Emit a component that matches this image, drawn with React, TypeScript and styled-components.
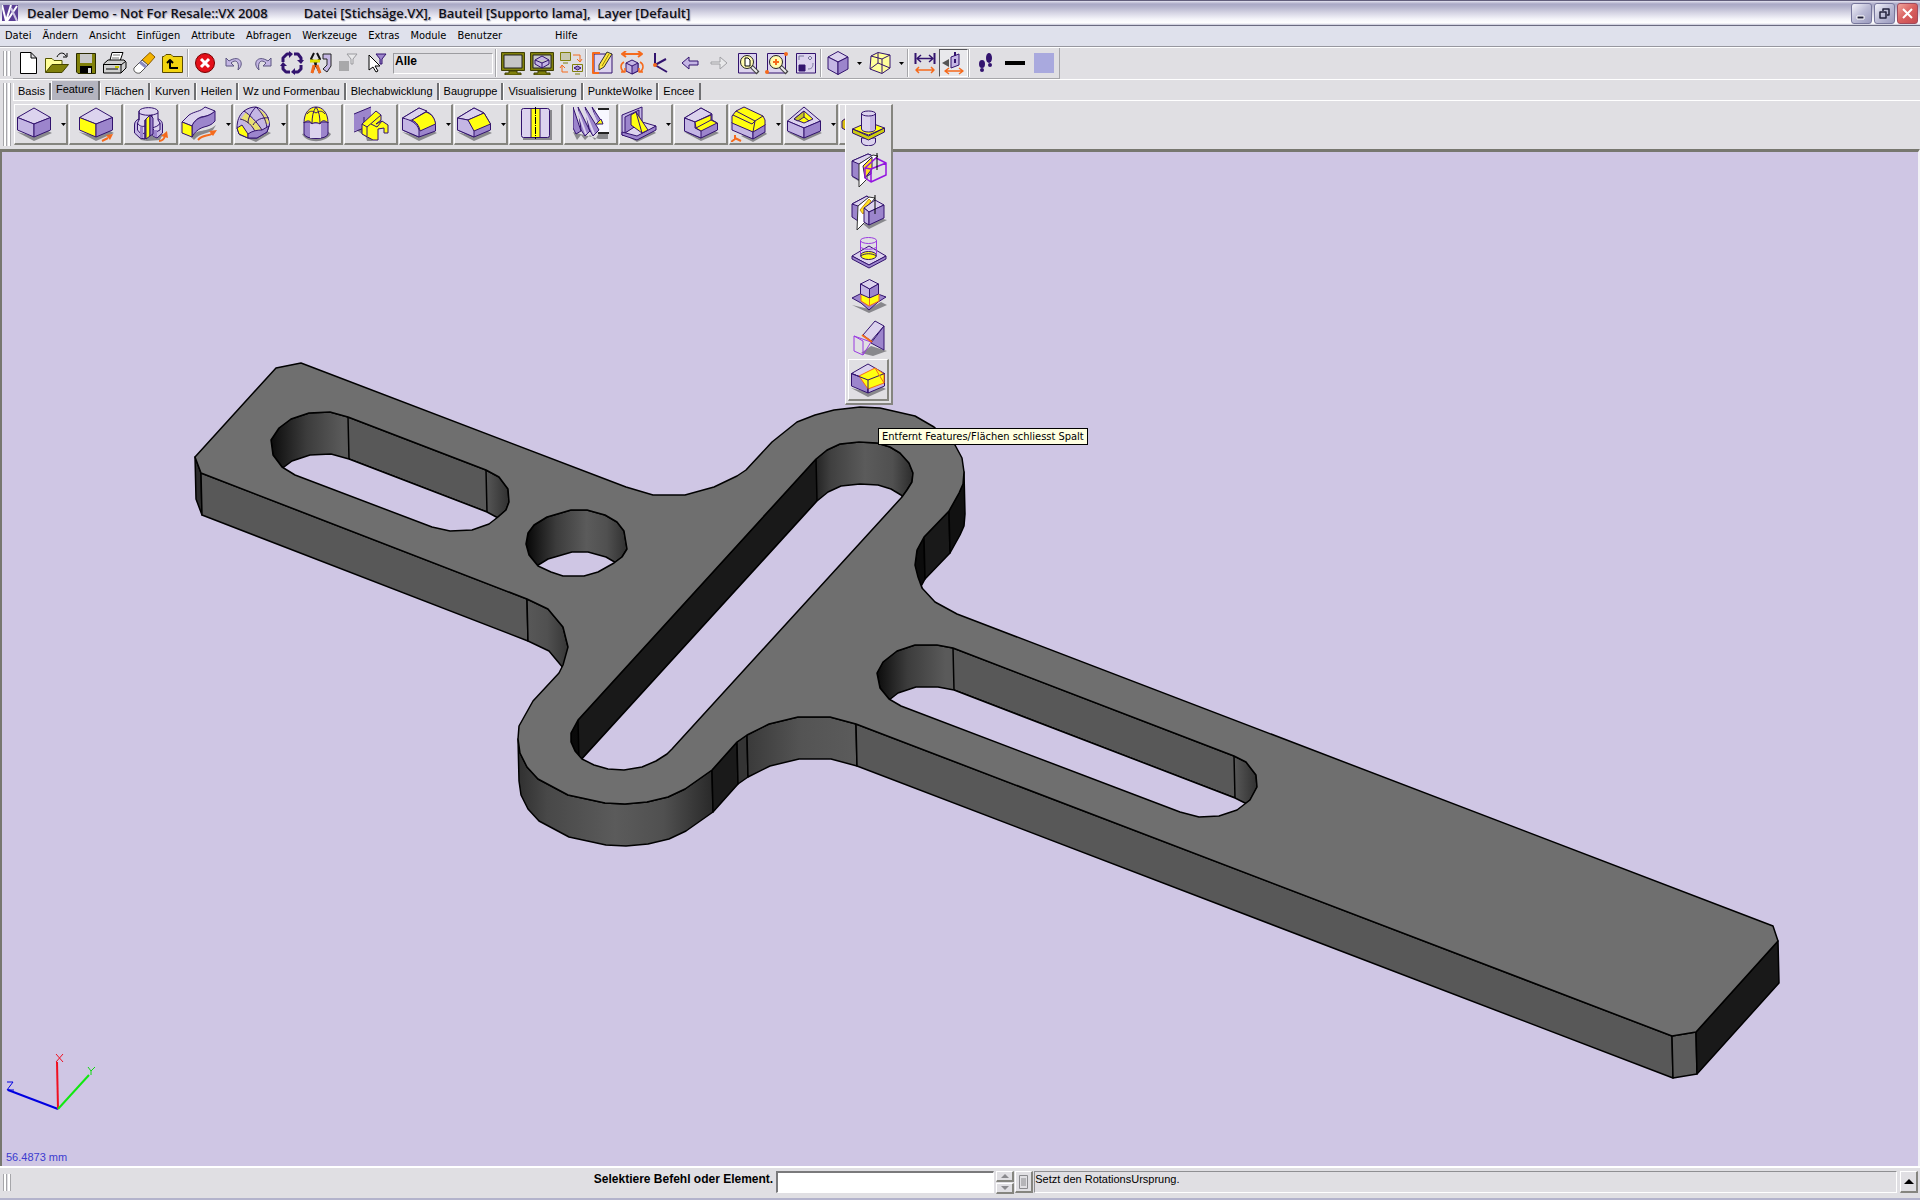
import React, { ReactNode } from "react";
import styled, { createGlobalStyle, css } from "styled-components";

const color = {
  face: "#e0dfe3",
  light: "#ffffff",
  dark: "#8a8a86",
  canvas: "#cfc6e4",
  ink: "#32136e",
  pale: "#dcd3ee",
  mid: "#c4b6e4",
  deep: "#9c85cc",
  yellow: "#ffff10",
  orange: "#f56a1c",
  olive: "#80800a",
  shade: "#88888c",
};

const uiFont = `"DejaVu Sans Condensed", "DejaVu Sans", sans-serif`;
const plainFont = `"Liberation Sans", sans-serif`;

const GlobalStyle = createGlobalStyle`
  *, *::before, *::after { box-sizing: border-box; }
  body { margin: 0; background: ${color.face}; }
  button, input { font: inherit; color: inherit; margin: 0; }
`;

/* ---------- layout ---------- */

const Shell = styled.div`
  display: flex;
  flex-direction: column;
  height: 100vh;
  overflow: hidden;
  background: ${color.face};
  color: #000;
  font: 11px/14px ${uiFont};
`;

const TitleBar = styled.header`
  display: flex;
  align-items: center;
  flex: none;
  height: 26px;
  padding: 0 2px;
  border-top: 1px solid #625e7c;
  border-bottom: 1px solid #6a6a80;
  background: linear-gradient(#e4e3f0 0, #a9a8c5 3px, #b5b4cd 6px, #d6d5e4 12px, #f4f4f9 18px, #fff 22px, #c5c5d6 24px);
`;

const Title = styled.h1`
  display: flex;
  gap: 36px;
  flex: 1;
  margin: 0 0 0 9px;
  font: 600 13px/20px "Open Sans", sans-serif;
  color: #101018;
  text-shadow: 1px 1px 1px #a5a5b8;
  white-space: pre;
`;

const WindowButtons = styled.div`
  display: flex;
  gap: 2px;
`;

const WindowButton = styled.button<{ $close?: boolean }>`
  display: grid;
  place-items: center;
  width: 21px;
  height: 21px;
  padding: 0;
  border: 1px solid ${(p) => (p.$close ? "#a04a5c" : "#77779c")};
  border-radius: 3px;
  background: ${(p) =>
    p.$close
      ? "linear-gradient(135deg, #f0a49c, #d9605f 50%, #c54a50)"
      : "linear-gradient(135deg, #f3f3fa, #bcbcd6 50%, #9a9abd)"};
`;

const MenuBar = styled.nav`
  display: flex;
  flex: none;
  gap: 11px;
  height: 21px;
  padding: 2px 5px;
  border-bottom: 1px solid #97979f;
  background: #dfe1ec;
`;

const MenuItem = styled.button<{ $apart?: boolean }>`
  padding: 0;
  border: 0;
  background: none;
  line-height: 14px;
  margin-left: ${(p) => (p.$apart ? "42px" : "0")};
`;

const Band = styled.div`
  display: flex;
  flex: none;
  border-top: 1px solid ${color.light};
`;

const Grip = styled.span`
  flex: none;
  align-self: stretch;
  width: 8px;
  margin: 3px 2px 3px 3px;
  border: solid #a6a6aa;
  border-width: 0 1px;
  background: linear-gradient(90deg, #fff 0 2px, #a6a6aa 2px 3px, ${color.face} 3px 4px, #fff 4px);
`;

const ToolRow = styled.div`
  display: flex;
  align-items: center;
  height: 31px;
  padding-right: 1px;
  border-right: 1px solid #a6a6aa;
  border-bottom: 1px solid #a6a6aa;
`;

const Tool = styled.button<{ $pressed?: boolean; $wide?: boolean }>`
  display: flex;
  align-items: center;
  justify-content: center;
  gap: 7px;
  width: ${(p) => (p.$wide ? "42px" : "29px")};
  height: 28px;
  padding: 0;
  border: 1px solid transparent;
  background: none;
  ${(p) =>
    p.$pressed &&
    css`
      border-color: #55555a #fff #fff #55555a;
      background: #e9e9ec;
    `}
`;

const Divider = styled.span`
  width: 2px;
  height: 28px;
  margin-right: 1px;
  border-left: 1px solid #a6a6aa;
  border-right: 1px solid #fff;
`;

const FilterField = styled.input`
  width: 100px;
  height: 21px;
  margin: 0 2px 0 0;
  padding: 0 1px 4px;
  border: 1px solid;
  border-color: #9c9ca0 #fff #fff #9c9ca0;
  background: ${color.face};
  font: 700 12px/14px ${plainFont};
`;

const RibbonBody = styled.div`
  display: flex;
  flex: 1;
  flex-direction: column;
  min-width: 0;
`;

const Tabs = styled.div`
  display: flex;
  align-items: flex-end;
  height: 21px;
  border-bottom: 1px solid #fff;
`;

const Tab = styled.button<{ $active?: boolean }>`
  height: ${(p) => (p.$active ? "19px" : "17px")};
  padding: ${(p) => (p.$active ? "0 4px 3px" : "0 4px")};
  border: 0;
  border-right: 2px solid #6f6f72;
  border-left: 1px solid #fff;
  background: ${(p) => (p.$active ? "#b4b4bf" : color.face)};
  font: 11px/15px ${plainFont};
  white-space: nowrap;
`;

const FeatureRow = styled.div`
  display: flex;
  gap: 1px;
  height: 48px;
  padding: 3px 0 0 1px;
`;

const raised = css`
  border: solid;
  border-width: 1px 2px 2px 1px;
  border-color: #fff #85857f #85857f #fff;
  background: ${color.face};
`;

const FeatureButton = styled.button<{ $menu?: boolean }>`
  ${raised}
  display: flex;
  align-items: center;
  justify-content: ${(p) => (p.$menu ? "flex-start" : "center")};
  gap: 9px;
  width: 54px;
  height: 41px;
  padding: 0 0 0 1px;
`;

const FlyoutHost = styled.div`
  position: relative;
`;

const Flyout = styled.div`
  ${raised}
  position: absolute;
  z-index: 2;
  top: 0;
  left: 6px;
  width: 48px;
  padding: 2px;
`;

const FlyoutItem = styled.button<{ $hot?: boolean }>`
  display: grid;
  place-items: center;
  position: relative;
  width: 41px;
  height: 42px;
  padding: 0;
  border: 1px solid transparent;
  background: none;
  ${(p) => p.$hot && raised}
`;

const Tooltip = styled.span`
  position: absolute;
  top: 68px;
  left: 29px;
  padding: 0 3px;
  border: 1px solid #000;
  background: #ffffe1;
  line-height: 15px;
  white-space: nowrap;
`;

const Canvas = styled.main`
  flex: 1;
  min-height: 0;
  border: solid;
  border-width: 3px 2px 0;
  border-color: #77776f #f2f2f6 #fff #77776f;
  background: ${color.canvas};
`;

const Scene = styled.svg`
  display: block;
  width: 100%;
  height: 100%;
`;

const StatusBar = styled.footer`
  display: flex;
  align-items: flex-start;
  flex: none;
  height: 34px;
  padding: 3px 2px 4px 0;
  border-top: 2px solid #fff;
  border-bottom: 2px solid #b3b3cc;
`;

const PromptLabel = styled.label`
  flex: 0 0 calc(40% - 4px);
  padding-right: 3px;
  text-align: right;
  font: 700 12px/17px ${plainFont};
`;

const CommandInput = styled.input`
  width: 218px;
  height: 22px;
  padding: 0 3px;
  border: solid;
  border-width: 2px 1px 1px 2px;
  border-color: #7a7a7c #fff #fff #7a7a7c;
  background: #fff;
`;

const Spinner = styled.div`
  display: grid;
  gap: 1px;
  margin: 0 1px 0 2px;
`;

const SmallButton = styled.button<{ $tall?: boolean }>`
  ${raised}
  display: grid;
  place-items: center;
  width: 18px;
  height: ${(p) => (p.$tall ? "22px" : "11px")};
  padding: 0;
`;

const Message = styled.output`
  flex: 1;
  height: 22px;
  margin: 0 3px 0 1px;
  border: 1px solid;
  border-color: #8f8f92 #fff #fff #8f8f92;
  font: 11px/15px ${plainFont};
`;

/* ---------- icons ---------- */

const Glyph = styled.svg`
  flex: none;
  fill: none;
  stroke: ${color.ink};
  stroke-linejoin: round;
`;

const Icon = ({ size = 24, children }: { size?: number; children: ReactNode }) => (
  <Glyph width={size} height={size} viewBox={`0 0 ${size} ${size}`} aria-hidden="true">
    {children}
  </Glyph>
);

const Caret = () => (
  <svg width="5" height="3" viewBox="0 0 5 3" aria-hidden="true">
    <path d="M0 0h5L2.500 3z" fill="#000" />
  </svg>
);

type ShapeProps = { d: string; f?: string; s?: string; w?: number };
const S = ({ d, f = "none", s, w }: ShapeProps) => (
  <path d={d} fill={f} style={s ? { stroke: s } : undefined} strokeWidth={w} />
);

const Cast = ({ d = "M1 26L18 35L36 27L30 24L18 30z" }: { d?: string }) => <S d={d} f={color.shade} s="none" />;
const Push = ({ d = "M24 35L30 32" }: { d?: string }) => (
  <>
    <S d={d} s={color.orange} w={2} />
    <S d="M28 29L35 28L32 34z" f={color.orange} s="none" />
  </>
);
const { pale, mid, deep, yellow, ink, orange, olive } = color;

const Box = ({ left = mid, right = deep, top = pale }) => (
  <>
    <S d="M1.500 11.500L18 2L34.500 11.500L18 18z" f={top} />
    <S d="M1.500 11.500L18 18V31L1.500 24z" f={left} />
    <S d="M34.500 11.500L18 18V31L34.500 24z" f={right} />
  </>
);

const feature: Record<string, ReactNode> = {
  box: <><Cast /><Box /></>,
  extrude: <><Cast /><Box left={yellow} /><Push /></>,
  revolve: (
    <>
      <Cast d="M2 27L8 34L14 35L27 34L30 28z" />
      <S d="M6 13C3 14 1.500 16 1.500 19V27L7 32L12 33V14z" f={mid} />
      <S d="M22 12C27 13 29.500 15 29.500 19V27L24 32L20 30V14z" f={mid} />
      <S d="M6 5C8 .5 23 .5 25 5V14L27 17V24L23 26L19 22V9L12 14V27L8 28L4.500 24V17L6 14z" f={pale} />
      <S d="M6 5V14M6 7C10 10 20 10 25 7M12 14V33M4.500 17C6 20 9 21 12 20M19 22C22 21 26 20 27 17" />
      <S d="M10 21V32L7 31V21zM20 24V30L24 31V24z" f={deep} s="none" />
      <S d="M13 13L17 9V30L13 33z" f={yellow} />
      <S d="M17 9L20 12V28L17 30z" f={deep} />
      <S d="M26 35C29 35 31 33 32 30" s={orange} w={2} />
      <S d="M28 30L34 25L35 32z" f={orange} s="none" />
    </>
  ),
  sweep: (
    <>
      <Cast d="M10 31C16 22 26 27 35 19L32 24C25 29 20 26 13 34z" />
      <S d="M1 16L8 9C14 5 19 6 24 1L34 5C30 9 26 10 20 11C15 13 13 16 11 20z" f={pale} />
      <S d="M11 20C13 15 17 12 22 11C27 10 31 8 34 5V15C31 19 27 20 23 21C17 23 14 26 11 31z" f={deep} />
      <S d="M1 16L11 20V31L1 27z" f={yellow} />
      <S d="M17 34C22 28 27 31 32 27" s={orange} w={2} />
      <S d="M28 25L36 24L32 30z" f={orange} s="none" />
    </>
  ),
  loft: (
    <>
      <Cast d="M3 29L20 36L35 27L28 24z" />
      <S d="M1 22C1 15 3 9 8 5C12 2 16 1 20 1C28 3 33 10 33.500 19L31 26L21 32L12 32L3 28z" f={mid} />
      <S d="M5 13L10 6L26 23L20 26L14 19z" f="#e8e070" s="none" />
      <S d="M22 3C28 5 32 11 33 17L30 19C28 12 26 8 22 3z" f="#e8e070" s="none" />
      <S d="M8 5C14 9 21 16 26 24M4 13C10 14 17 19 20 28M20 1C15 6 12 12 12 17M33 12C26 11 20 14 17 19M20 1C26 7 30 13 31 22" />
      <S d="M1 22L6 19L12 28V32L3 28z" f={yellow} />
      <S d="M12 28C16 25 21 24 26 24L33 20L31 26L21 32H12z" f={deep} />
    </>
  ),
  dome: (
    <>
      <Cast d="M4 28C9 38 28 37 33 28L28 24z" />
      <S d="M6 16V28C7 34 29 34 30 28V16z" f={deep} />
      <S d="M12 18V32H23V18z" f={pale} s="none" />
      <S d="M6 17C6 6 12 1 18 1C24 1 30 6 30 17C26 13 23 15 22 18C19 16 16 16 14 18C12 14 9 14 6 17z" f={yellow} />
      <S d="M14 18C14 11 15 5 18 1C21 5 22 11 22 18M9 8C12 4 15 5 18 7C21 5 24 4 27 8" />
    </>
  ),
  flange: (
    <>
      <Cast d="M2 23L13 31L14 35L20 35L10 22z" />
      <S d="M1 8L18 1V14L12 17V22L1 25z" f={deep} s="none" />
      <S d="M1 8L18 1M11 11V22L1 26" />
      <S d="M9 18L23 5L28 9V14L23 18L29 15L35 19V27H31V22L25 23V34L20 34L9 28z" f={yellow} />
      <S d="M9 18L14 21L28 9M14 21V30M18 18L24 21L29 15" />
    </>
  ),
  fillet: (
    <>
      <Cast />
      <S d="M1.500 12L18 2L26 6C32 8 34 14 34.500 20V25L18 31L1.500 24z" f={deep} />
      <S d="M1.500 12L18 2L26 5L11 14C8 15 4 14 1.500 12z" f={pale} />
      <S d="M1.500 12C10 14 16 17 18 24V31L1.500 24z" f={mid} />
      <S d="M11 14L25 6C31 8 34 13 34.500 18L19 25C18 19 15 16 11 14z" f={yellow} />
    </>
  ),
  chamfer: (
    <>
      <Cast />
      <S d="M1.500 12L18 2L28 7L34.500 18V24L18 31L1.500 24z" f={deep} />
      <S d="M1.500 12L18 2L28 7L12 14z" f={pale} />
      <S d="M1.500 12L12 14L18 24V31L1.500 24z" f={mid} />
      <S d="M12 14L28 7L34.500 18L18 25z" f={yellow} />
    </>
  ),
  partition: (
    <>
      <S d="M7 4H34V34H5V32z" f={color.shade} s="none" />
      <rect x="3.500" y="2.500" width="28" height="29" rx="2" fill={pale} />
      <S d="M13 2.500H22V31.500H13z" f={yellow} />
      <path d="M17.500 1V33" stroke="#000" strokeDasharray="7 1 1 1" />
    </>
  ),
  thread: (
    <>
      <S d="M0 26L4 34L8 29L12 34L17 29L22 34L26 27H35V33H26z" f={color.shade} s="none" />
      <S d="M23 3H36V26H23z" f="#f8f8ff" s="none" />
      <S d="M0 1L8 25L3 28L0 22zM5 1L17 25L12 30L8 24zM12 1L26 24L20 30L16 23zM19 1L29 16L25 18L22 11z" f={deep} />
      <S d="M3 1L13 28M10 1L21 28M17 1L25 19" s={pale} w={2} />
      <S d="M23 18L28 13L30 18z" f={yellow} />
      <S d="M25 3H36M25 27H36" s="#222" w={2} />
    </>
  ),
  rib: (
    <>
      <Cast d="M4 29L16 36L35 27L28 22z" />
      <S d="M1 9L21 1V18L1 29z" f={mid} />
      <S d="M4 11L18 4V20L4 27z" f={deep} />
      <S d="M1 29L21 16L35 20L16 32z" f={pale} />
      <S d="M1 26L16 30L35 20V24L16 34L1 29z" f={deep} />
      <S d="M10 9L15 6L27 24L21 27L10 19z" f={yellow} />
      <S d="M15 6L21 27" />
    </>
  ),
  step: (
    <>
      <Cast />
      <S d="M1.500 12L18 2L29 8V14L34.500 17V24L18 32L1.500 25z" f={deep} />
      <S d="M1.500 12L18 2L29 8L12 16z" f={pale} />
      <S d="M1.500 12L12 16V22L18 25V32L1.500 25z" f={mid} />
      <S d="M12 16L28 9V14L34 17L18 25L13 22z" f={yellow} />
      <S d="M13 22L28 14" />
    </>
  ),
  ribbon: (
    <>
      <Cast d="M10 30L22 36L36 28L30 22z" />
      <S d="M1 16L22 25V33L1 24z" f={mid} />
      <S d="M22 25L34 18V26L22 33z" f={deep} />
      <S d="M1 17V10L5 5L13 1L32 10L34 14V19L22 26z" f={yellow} />
      <S d="M5 5L24 15L32 10M24 15L22 26M2 9L21 18L24 15" />
      <S d="M4 29V33L0 36M4 32L10 35" s={orange} w={2} />
    </>
  ),
  pocket: (
    <>
      <Cast />
      <S d="M1.500 15L18 1L34.500 15L18 22z" f={pale} />
      <S d="M1.500 15L18 22V32L1.500 25z" f={mid} />
      <S d="M34.500 15L18 22V32L34.500 25z" f={deep} />
      <S d="M8 13L18 5L27 13L18 17z" f={yellow} />
      <S d="M8 13L18 5V11L12 15z" f="#c8c820" />
      <S d="M18 11L23 15" />
    </>
  ),
  combine: (
    <>
      <S d="M1 15L8 10V26L1 22z" f="#d8bd10" />
      <S d="M8 10H20V28H8z" f={pale} />
    </>
  ),
};

const flyoutIcons: ReactNode[] = [
  <>
    <S d="M10.500 28V32C11 37 24 37 24.500 32V28z" f={pale} />
    <S d="M1.500 19L17.500 12L33.500 18L17.500 25z" f={yellow} />
    <S d="M1.500 19L17.500 26L33.500 18V22L17.500 30L1.500 23z" f="#cccc10" />
    <S d="M10.500 3.500V19C11 23 24 23 24.500 19V3.500z" f={pale} />
    <S d="M19 4H24V20L19 21z" f={mid} s="none" />
    <ellipse cx="17.500" cy="3.500" rx="7" ry="2.500" fill={pale} />
    <S d="M10.500 3.500V19M24.500 3.500V19" />
  </>,
  <>
    <Cast d="M1 25L9 30L16 26L10 23z" />
    <S d="M1 9L17 2L20 3V22L8 28L1 24z" f={deep} />
    <S d="M1 9L17 2L22 4L8 12z" f={pale} />
    <S d="M8 12L22 3L27 4L16 14V27L8 35z" f="#fff" s="#333" />
    <S d="M12 14L21 5V17L14 26z" f="#ffe020" />
    <S d="M14 16L25 6L35 11L20 17zM14 16L20 17V30L14 26zM20 17L35 11V23L20 30z" s="#9414e0" w={1.5} />
    <S d="M26 1V18" s="#000" />
  </>,
  <>
    <Cast d="M12 30L18 35L36 26L28 24z" />
    <S d="M1 10L16 2L20 5V24L7 27L1 23z" f={deep} />
    <S d="M1 10L16 2L18 4L7 12z" f={pale} />
    <S d="M7 12L18 3L24 4L14 16V28L6 36z" f="#fff" s="#333" />
    <S d="M9 16L18 5L20 7L12 20z" f="#ffe020" s="#c89020" />
    <S d="M13 14L24 6L33 11L18 18z" f={pale} />
    <S d="M13 14L18 18V31L13 28z" f={mid} />
    <S d="M18 18L33 11V24L18 31z" f={deep} />
    <S d="M24 1V20" s="#000" />
  </>,
  <>
    <S d="M1 20L18 10L35 20L18 29z" f={pale} />
    <S d="M1 20L18 29L35 20V23L18 32L1 23z" f={deep} />
    <ellipse cx="17.500" cy="19.500" rx="8" ry="4" fill={yellow} />
    <S d="M10 20C13 17 22 17 25 20" />
    <S d="M9.500 4.500V18M25.500 4.500V18M9.500 11C12 14 23 14 25.500 11" s="#9a3be0" />
    <ellipse cx="17.500" cy="4.500" rx="8" ry="3" style={{ stroke: "#9a3be0" }} />
  </>,
  <>
    <Cast d="M1 27L18 35L36 27L30 24L18 31z" />
    <S d="M1 20L9 16L18 14L27 16L35 19L27 24L18 32L10 25z" f={deep} />
    <S d="M10 16L18 13L28 16V23L18 28L10 23z" f={yellow} s={orange} />
    <S d="M9.500 6L18.500 1.500L27.500 6L18.500 11z" f={pale} />
    <S d="M9.500 6L18.500 11V20L9.500 16z" f={mid} />
    <S d="M27.500 6L18.500 11V20L27.500 16z" f={deep} />
    <S d="M18.500 20V27" s={orange} />
  </>,
  <>
    <Cast d="M10 33L20 26L36 31L22 36z" />
    <S d="M12 15L24 1L33 6L20 21z" f={pale} />
    <S d="M33 6V30L20 23z" f={deep} />
    <S d="M3 16V31L12 35L20 22L3 16L12 21V35" s="#9a3be0" />
    <S d="M11 15L21 22" s={orange} w={2} />
  </>,
  <>
    <Cast />
    <Box left={deep} right={mid} />
    <S d="M9 14L25 6L34 12V21L18 27z" f={yellow} s={orange} />
    <S d="M1.500 11.500L18 18L34.500 11.500M18 18V31" />
    <S d="M25 6L34 21" s={orange} />
  </>,
];

const monitor = (
  <>
    <S d="M.5 1.500H23.500V19.500H.5z" f={olive} s="#3f3f05" />
    <S d="M3 4H21V17H3z" f="#c6c6c6" s="#222" />
    <S d="M8 20H16V22H20V24H4V22H8z" f={olive} s="#3f3f05" />
  </>
);

const Hex = ({ top = pale, left = mid, right = deep }) => (
  <>
    <S d="M2 6L12 .5L22 6L12 11z" f={top} />
    <S d="M2 6L12 11V23.500L2 18z" f={left} />
    <S d="M22 6L12 11V23.500L22 18z" f={right} />
  </>
);

const lens = (
  <>
    <S d="M15 15L22 22" s="#444" w={4} />
    <S d="M16 16L21 21" s="#eee" w={2} />
    <circle cx="11" cy="11" r="6.500" fill="#fffbb0" stroke="#222" />
  </>
);

const tool: Record<string, ReactNode> = {
  neu: <S d="M4.500 1.500H15L20.500 7V22.500H4.500zM15 1.500V7H20.500" f="#fff" s="#000" />,
  oeffnen: (
    <>
      <S d="M.5 21V7.500H7L9 9.500H17V13" f="#ffff9a" s="#555500" />
      <S d="M.5 21.500L7 13.500H23.500L17 21.500z" f={olive} s="#444400" />
      <S d="M12 6C14 1 19 1 21 5M22 2V6H18" s="#000" />
    </>
  ),
  sichern: (
    <>
      <S d="M2.500 2.500H21.500V22.500H4L2.500 21z" f={olive} s="#2a2a00" />
      <S d="M6 3H18V12H6z" f="#c8c8c8" s="none" />
      <S d="M6 15H18V22H6z" f="#000" s="none" />
      <S d="M14 17H17V22H14z" f="#ddd" s="none" />
    </>
  ),
  drucken: (
    <>
      <S d="M7 9L9 1.500H20L17 10" f="#fff" s="#000" />
      <S d="M10 4H17M9 7H16" s="#777" />
      <S d="M.5 13L5 9H21L23 11V17L18 22H.5z" f="#d0d0d0" s="#000" />
      <S d="M.5 13.500H18V22M18 14L23 10M3 18H15" s="#000" />
      <S d="M12 16H16" s="#c8c800" w={2} />
    </>
  ),
  loeschen: (
    <>
      <S d="M10 9L18 1.500L23 6L16 14z" f="#f4b400" s="#8a5a00" />
      <S d="M2 17L10 9L16 14L8 22C4 23 1 20 2 17z" f="#fff" s="#555" />
      <S d="M8 11L14 16" s="#8a8ac0" w={3} />
    </>
  ),
  ordner: (
    <>
      <S d="M1.500 21.500V5.500H3L5 3.500H10L12 5.500H21.500V21.500z" f="#f2d410" s="#5a4a00" />
      <S d="M9 10V17H17M6 12L9 9L12 12" s="#000" w={2} />
    </>
  ),
  stopp: (
    <>
      <circle cx="12" cy="12" r="9.500" fill="#e3101a" stroke="#700" />
      <S d="M8 8L16 16M16 8L8 16" s="#fff" w={3} />
    </>
  ),
  zurueck: <S d="M4 7V15H12L9 12C13 8 18 10 16 19C23 13 18 3 7 10z" f={mid} s="#5b5480" />,
  vor: <S d="M20 7V15H12L15 12C11 8 6 10 8 19C1 13 6 3 17 10z" f={mid} s="#5b5480" />,
  zyklus: (
    <>
      <S d="M3 11V7L7 3H10M14 3H18L21 7V9M21 14V18L18 21H15M10 21H6L3 18V15" w={3} />
      <S d="M9 0L13 3L9 7zM17 9H24L21 13zM15 17L11 21L15 24zM0 15H7L3 11z" f={ink} s="none" />
    </>
  ),
  werkzeug: (
    <>
      <S d="M5 2L2 8L7 12L3 22M8 2L11 8L6 12L11 22" s="#111" w={2} />
      <S d="M5 14L3 22M8 14L11 22" s={orange} w={3} />
      <S d="M1 10H11" s="#e0e000" w={3} />
      <S d="M14 3H22V15L18 21L14 18L18 14V8H14z" f={mid} s="#222" />
    </>
  ),
  grau: (
    <>
      <S d="M1 10H11V20H1z" f="#a8a8aa" s="none" />
      <S d="M9 3H19L15 8V13H13V8z" s="#9a9a9e" f="#e8e8ea" />
    </>
  ),
  zeiger: (
    <>
      <S d="M2 4V19L6 16L9 21L11 20L8 15H13z" f="#fff" s="#000" />
      <S d="M9 3H19L15 8V13H13V8z" f={deep} />
    </>
  ),
  schirm: monitor,
  schirm3d: (
    <>
      {monitor}
      <S d="M5 9L12 5L19 9V13L12 17L5 13zM5 9L12 12L19 9M12 12V17" f={mid} />
    </>
  ),
  tausch: (
    <>
      <S d="M1.500 1.500H11.500V9.500H1.500zM4 12H9" f="#c8c8b0" s={olive} />
      <S d="M13.500 13.500H23.500V20.500H13.500zM16 23H21" f={pale} s={olive} />
      <S d="M15 17L18.500 15L22 17L18.500 19z" f={deep} />
      <S d="M14 4H21V10M18 8L21 11L23 8M9 21H3V15M1 17L3 14L6 17" s={orange} />
    </>
  ),
  skizze: (
    <>
      <S d="M3 3H21V22H3z" f={pale} />
      <S d="M9 2H2V22H8" s={orange} w={2} />
      <S d="M8 14L16 1L21 3L13 16L8 19z" f="#ffe640" s="#333" />
      <S d="M11 15L18 3" s="#998800" />
    </>
  ),
  drehen: (
    <>
      <S d="M3 3H21M6 0L2 3L6 6M18 0L22 3L18 6" s={orange} w={2} />
      <S d="M6 12L12 9L18 12V20L12 23L6 20z" f={mid} />
      <S d="M12 15L18 12V20L12 23z" f={deep} />
      <S d="M6 12L12 15" />
      <S d="M4 11C0 13 0 18 4 21M1 21H5V17M20 11C24 13 24 18 20 21M23 21H19V17" s={orange} w={1.5} />
    </>
  ),
  achsen: (
    <>
      <S d="M6 2V14L17 8M6 14L18 21" w={2} />
      <circle cx="6" cy="14" r="2" fill={orange} stroke="none" />
    </>
  ),
  links: <S d="M4 12L11 6V10H20V14H11V18z" f={mid} />,
  rechts: <S d="M20 12L13 6V11H4V13H13V18z" f="#e8e8ea" s="#a0a0a4" />,
  zoomseite: (
    <>
      <S d="M2.500 2.500H20.500V22H2.500z" f={pale} />
      {lens}
      <S d="M9 7H12L14 9V15H9z" f="#fff" s="#000" />
    </>
  ),
  zoomplus: (
    <>
      <S d="M2.500 2.500H20.500V22H2.500z" f={pale} />
      {lens}
      <S d="M11 8V14M8 11H14" s={orange} w={2} />
      <circle cx="21" cy="3" r="2" fill={orange} stroke="none" />
      <circle cx="2" cy="21" r="2" fill={orange} stroke="none" />
    </>
  ),
  ausschnitt: (
    <>
      <S d="M2.500 2.500H21.500V22H2.500z" f={pale} />
      <S d="M5 14H11V20H5z" f={ink} />
      <S d="M5 5H10M5 5V9M14 18C18 18 19 16 19 12M16 5L18 7L16 9L14 7z" s="#77779a" />
    </>
  ),
  wuerfel: <Hex />,
  gelb: (
    <>
      <S d="M3 5L10 1.500L22 4V17L14 22.500L2 18z" f="#ffff9a" />
      <S d="M3 5L14 8L22 4M14 8V22M10 2V12L2 18M10 12L22 17" />
    </>
  ),
  mass: (
    <>
      <S d="M2.500 2V13M21.500 2V13" w={2} />
      <S d="M4 7.500H20M8 4L4 7.500L8 11M16 4L20 7.500L16 11" w={1.5} />
      <S d="M3 19H21M6 16L3 19L6 22M18 16L21 19L18 22" s={orange} w={1.5} />
    </>
  ),
  blick: (
    <>
      <S d="M0 12L7 8V16z" f="#555" s="none" />
      <S d="M9 6L17 3V14L9 17z" f={mid} />
      <S d="M13 1V5M13 8V12" w={2} />
      <S d="M4 20H20M7 17L3 20L7 23M17 17L21 20L17 23" s={orange} w={1.5} />
    </>
  ),
  schritte: (
    <g fill={ink} stroke="none">
      <ellipse cx="8" cy="13" rx="3" ry="4" /><circle cx="8" cy="19" r="2" />
      <ellipse cx="15" cy="7" rx="3" ry="5" /><circle cx="16" cy="14" r="2" />
    </g>
  ),
  linie: <S d="M2 10H22V14H2z" f="#000" s="none" />,
  farbe: <S d="M2 2H22V22H2z" f="#a9a9de" s="none" />,
};

/* ---------- bars ---------- */

const menus = ["Datei", "Ändern", "Ansicht", "Einfügen", "Attribute", "Abfragen", "Werkzeuge", "Extras", "Module", "Benutzer", "Hilfe"];
const tabs = ["Basis", "Feature", "Flächen", "Kurven", "Heilen", "Wz und Formenbau", "Blechabwicklung", "Baugruppe", "Visualisierung", "PunkteWolke", "Encee"];
const groupA = ["neu", "oeffnen", "sichern", "drucken", "loeschen", "ordner"];
const groupB = ["stopp", "zurueck", "vor", "zyklus", "werkzeug", "grau", "zeiger"];
const groupC = ["schirm", "schirm3d", "tausch"];
const groupD = ["skizze", "drehen", "achsen", "links", "rechts", "zoomseite", "zoomplus", "ausschnitt"];
const groupE = ["wuerfel", "gelb"];
const groupF = ["mass", "blick"];
const groupG = ["schritte", "linie", "farbe"];
const features: [string, boolean][] = [
  ["box", true], ["extrude", false], ["revolve", false], ["sweep", true], ["loft", true],
  ["dome", false], ["flange", false], ["fillet", true], ["chamfer", true], ["partition", false],
  ["thread", false], ["rib", true], ["step", false], ["ribbon", true], ["pocket", true],
];

const Tools = ({ names, wide }: { names: string[]; wide?: boolean }) => (
  <>
    {names.map((n) => (
      <Tool key={n} aria-label={n} $wide={wide} $pressed={n === "blick"}>
        <Icon>{tool[n]}</Icon>
        {wide && <Caret />}
      </Tool>
    ))}
  </>
);

/* ---------- model ---------- */

type Pt = [number, number];
const DX = 1;
const DY = 42;
const path = (p: Pt[]) => "M" + p.map((q) => q.join(" ")).join("L") + "Z";
const drop = (p: Pt[]): Pt[] => p.map(([x, y]) => [x + DX, y + DY]);

const outline: Pt[] = [
  [276, 368], [301, 363], [626, 487], [653, 495], [685, 495], [714, 487], [737, 476], [746, 470],
  [772, 442], [797, 422], [815, 415], [834, 410], [860, 407], [880, 408], [915, 416], [934, 427],
  [955, 445], [962, 458], [964, 472], [963, 484], [959, 493], [949, 511], [924, 537], [917, 550],
  [915, 565], [918, 577], [922, 588], [935, 602], [957, 614], [1773, 926], [1778, 941],
  [1696, 1032], [1672, 1036], [856, 724], [830, 717], [798, 717], [769, 724], [747, 735],
  [737, 742], [712, 770], [685, 789], [668, 797], [647, 802], [625, 804], [605, 803], [568, 795],
  [538, 779], [527, 767], [520, 753], [518, 739], [519, 726], [533, 701], [559, 673], [563, 665],
  [568, 647], [563, 627], [548, 609], [527, 599], [201, 473], [195, 457],
];

const walls: { pts: Pt[]; fill: string }[] = [
  { pts: [[195, 457], [201, 473]], fill: "#2c2c2c" },
  { pts: [[201, 473], [527, 599]], fill: "#585858" },
  { pts: [[527, 599], [548, 609], [563, 627], [568, 647]], fill: "url(#curl)" },
  { pts: [[518, 739], [520, 753], [527, 767], [538, 779], [568, 795], [605, 803], [625, 804], [647, 802], [668, 797], [685, 789], [712, 770]], fill: "url(#bulge)" },
  { pts: [[712, 770], [737, 742]], fill: "#1a1a1a" },
  { pts: [[737, 742], [747, 735]], fill: "#343434" },
  { pts: [[747, 735], [769, 724], [798, 717], [830, 717], [856, 724]], fill: "url(#cove)" },
  { pts: [[856, 724], [1672, 1036]], fill: "#585858" },
  { pts: [[1672, 1036], [1696, 1032]], fill: "#5c5c5c" },
  { pts: [[1696, 1032], [1778, 941]], fill: "#191919" },
  { pts: [[915, 565], [918, 577], [922, 588]], fill: "#0c0c0c" },
  { pts: [[924, 537], [917, 550], [915, 565]], fill: "#0c0c0c" },
  { pts: [[949, 511], [924, 537]], fill: "#191919" },
  { pts: [[964, 472], [963, 484], [959, 493], [949, 511]], fill: "#111111" },
];

type Hole = { id: string; pts: Pt[]; fill: string; flat?: Pt[]; flatFill?: string };
const holes: Hole[] = [
  {
    id: "slotA",
    fill: "url(#slotAg)",
    pts: [[271, 440], [279, 428], [291, 419], [309, 413], [330, 412], [348, 417], [486, 470], [499, 477], [508, 489], [509, 502], [506, 510], [498, 517], [489, 524], [472, 530], [450, 531], [432, 527], [295, 475], [282, 467], [273, 455]],
    flat: [[348, 417], [486, 470]],
    flatFill: "#585858",
  },
  {
    id: "bore",
    fill: "url(#boreg)",
    pts: [[526, 544], [528, 533], [534, 525], [547, 517], [571, 510], [587, 510], [605, 515], [617, 522], [624, 531], [627, 549], [622, 557], [614, 563], [598, 572], [584, 576], [563, 576], [551, 572], [538, 566], [529, 555]],
  },
  {
    id: "slotB",
    fill: "url(#slotBg)",
    pts: [[816, 459], [827, 450], [840, 444], [859, 442], [877, 443], [890, 447], [900, 453], [909, 463], [913, 473], [912, 482], [907, 490], [902, 497], [672, 749], [667, 754], [656, 761], [642, 767], [624, 770], [608, 769], [594, 765], [582, 759], [575, 751], [571, 742], [571, 733], [578, 720]],
    flat: [[578, 720], [816, 459]],
    flatFill: "#191919",
  },
  {
    id: "slotC",
    fill: "url(#slotCg)",
    pts: [[877, 673], [883, 662], [897, 651], [915, 645], [937, 645], [953, 648], [1234, 756], [1246, 762], [1256, 775], [1257, 787], [1250, 800], [1237, 810], [1219, 816], [1199, 817], [1180, 812], [901, 706], [889, 699], [880, 688]],
    flat: [[953, 648], [1234, 756]],
    flatFill: "#585858",
  },
];

const Ramp = ({ id, x1, x2, stops }: { id: string; x1: number; x2: number; stops: [number, string][] }) => (
  <linearGradient id={id} gradientUnits="userSpaceOnUse" x1={x1} x2={x2} y1="0" y2="0">
    {stops.map(([o, c]) => <stop key={o} offset={o} stopColor={c} />)}
  </linearGradient>
);

const Model = () => (
  <Scene viewBox="2 152 1916 1014" preserveAspectRatio="xMinYMin meet" role="img" aria-label="Supporto lama">
    <defs>
      <Ramp id="curl" x1={527} x2={568} stops={[[0, "#585858"], [0.5, "#505050"], [1, "#363636"]]} />
      <Ramp id="bulge" x1={518} x2={712} stops={[[0, "#303030"], [0.15, "#484848"], [0.5, "#5b5b5b"], [0.75, "#505050"], [1, "#2a2a2a"]]} />
      <Ramp id="cove" x1={747} x2={856} stops={[[0, "#3a3a3a"], [0.5, "#545454"], [1, "#5b5b5b"]]} />
      <Ramp id="slotAg" x1={271} x2={509} stops={[[0, "#0c0c0c"], [0.15, "#3c3c3c"], [0.3, "#5a5a5a"], [0.9, "#585858"], [1, "#303030"]]} />
      <Ramp id="boreg" x1={526} x2={627} stops={[[0, "#060606"], [0.3, "#3c3c3c"], [0.6, "#5b5b5b"], [0.8, "#505050"], [1, "#303030"]]} />
      <Ramp id="slotBg" x1={571} x2={913} stops={[[0, "#0a0a0a"], [0.71, "#202020"], [0.76, "#404040"], [0.86, "#5b5b5b"], [0.94, "#505050"], [1, "#2c2c2c"]]} />
      <Ramp id="slotCg" x1={877} x2={1257} stops={[[0, "#0c0c0c"], [0.08, "#3c3c3c"], [0.18, "#5a5a5a"], [0.94, "#585858"], [1, "#303030"]]} />
      {holes.map((h) => <clipPath key={h.id} id={h.id}><path d={path(h.pts)} /></clipPath>)}
    </defs>
    <g stroke="#000" strokeWidth="1.500" strokeLinejoin="round">
      {walls.map((w, i) => <path key={i} d={path([...w.pts, ...drop(w.pts).reverse()])} fill={w.fill} />)}
      <path d={path(outline)} fill="#6f6f6f" />
      {holes.map((h) => (
        <g key={h.id}>
          <g clipPath={`url(#${h.id})`}>
            <path d={path(h.pts)} fill={h.fill} />
            {h.flat && <path d={path([...h.flat, ...drop(h.flat).reverse()])} fill={h.flatFill} />}
            <path d={path(drop(h.pts))} fill={color.canvas} />
          </g>
          <path d={path(h.pts)} fill="none" />
        </g>
      ))}
    </g>
    <g fill="none" strokeWidth="2">
      <path d="M58 1109L8 1090" stroke="#0000e0" />
      <path d="M7 1082H13L7 1090H14" stroke="#0000e0" strokeWidth="1" />
      <path d="M58 1109L57 1062" stroke="#f01020" />
      <path d="M56 1054L63 1062M63 1054L56 1062" stroke="#f01020" strokeWidth="1" />
      <path d="M58 1109L89 1075" stroke="#10e810" />
      <path d="M88 1067L91 1071L95 1067M91 1071V1075" stroke="#10d810" strokeWidth="1" />
    </g>
    <text x="6" y="1161" fill="#3b3bcf" fontFamily={plainFont} fontSize="11">56.4873 mm</text>
  </Scene>
);

export default function App() {
  return (
    <Shell>
      <GlobalStyle />
      <TitleBar>
        <Icon size={16}>
          <S d="M0 0H16V16H0z" f="#5b3f96" s="none" />
          <S d="M0 0L4 16L9 0M5 16L15 1" s="#fff" w={2} />
          <S d="M9 3L15 16" s="#cfc6e4" w={2} />
        </Icon>
        <Title>
          <span>Dealer Demo - Not For Resale::VX 2008</span>
          <span>Datei [Stichsäge.VX],  Bauteil [Supporto lama],  Layer [Default]</span>
        </Title>
        <WindowButtons>
          <WindowButton aria-label="Minimieren"><Icon size={15}><S d="M3 10H10V13H3z" f="#20203a" s="#fff" /></Icon></WindowButton>
          <WindowButton aria-label="Wiederherstellen"><Icon size={15}><S d="M6 5V3H12V9H10M3 6H9V12H3z" s="#22223c" w={1.5} /></Icon></WindowButton>
          <WindowButton aria-label="Schließen" $close><Icon size={15}><S d="M3 3L12 12M12 3L3 12" s="#fff" w={2} /></Icon></WindowButton>
        </WindowButtons>
      </TitleBar>
      <MenuBar>
        {menus.map((m) => <MenuItem key={m} $apart={m === "Hilfe"}>{m}</MenuItem>)}
      </MenuBar>
      <Band>
        <Grip />
        <ToolRow>
          <Tools names={groupA} />
          <Divider />
          <Tools names={groupB} />
          <FilterField aria-label="Filter" defaultValue="Alle" />
          <Divider />
          <Tools names={groupC} />
          <Divider />
          <Tools names={groupD} />
          <Divider />
          <Tools names={groupE} wide />
          <Divider />
          <Tools names={groupF} />
          <Divider />
          <Tools names={groupG} />
        </ToolRow>
      </Band>
      <Band>
        <Grip />
        <RibbonBody>
          <Tabs>
            {tabs.map((t) => <Tab key={t} $active={t === "Feature"}>{t}</Tab>)}
          </Tabs>
          <FeatureRow>
            {features.map(([n, menu]) => (
              <FeatureButton key={n} aria-label={n} $menu={menu}>
                <Icon size={36}>{feature[n]}</Icon>
                {menu && <Caret />}
              </FeatureButton>
            ))}
            <FlyoutHost>
              <FeatureButton aria-label="combine" $menu><Icon size={36}>{feature.combine}</Icon></FeatureButton>
              <Flyout>
                {flyoutIcons.map((icon, i) => (
                  <FlyoutItem key={i} $hot={i === 6}>
                    <Icon size={36}>{icon}</Icon>
                    {i === 6 && <Tooltip>Entfernt Features/Flächen schliesst Spalt</Tooltip>}
                  </FlyoutItem>
                ))}
              </Flyout>
            </FlyoutHost>
          </FeatureRow>
        </RibbonBody>
      </Band>
      <Canvas><Model /></Canvas>
      <StatusBar>
        <Grip />
        <PromptLabel htmlFor="command">Selektiere Befehl oder Element.</PromptLabel>
        <CommandInput id="command" />
        <Spinner>
          <SmallButton aria-label="Auf"><svg width="8" height="4"><path d="M0 4h8L4 0z" fill="#8a8a8e" /></svg></SmallButton>
          <SmallButton aria-label="Ab"><svg width="8" height="4"><path d="M0 0h8L4 4z" fill="#8a8a8e" /></svg></SmallButton>
        </Spinner>
        <SmallButton $tall aria-label="Liste">
          <svg width="9" height="14"><path d="M.5 .5h8v13h-8zM2 4h5M2 6h5M2 8h5M2 10h5" fill="none" stroke="#8a8a8e" /></svg>
        </SmallButton>
        <Message>Setzt den RotationsUrsprung.</Message>
        <SmallButton $tall aria-label="Mehr"><svg width="10" height="5"><path d="M0 5h10L5 0z" fill="#000" /></svg></SmallButton>
      </StatusBar>
    </Shell>
  );
}
